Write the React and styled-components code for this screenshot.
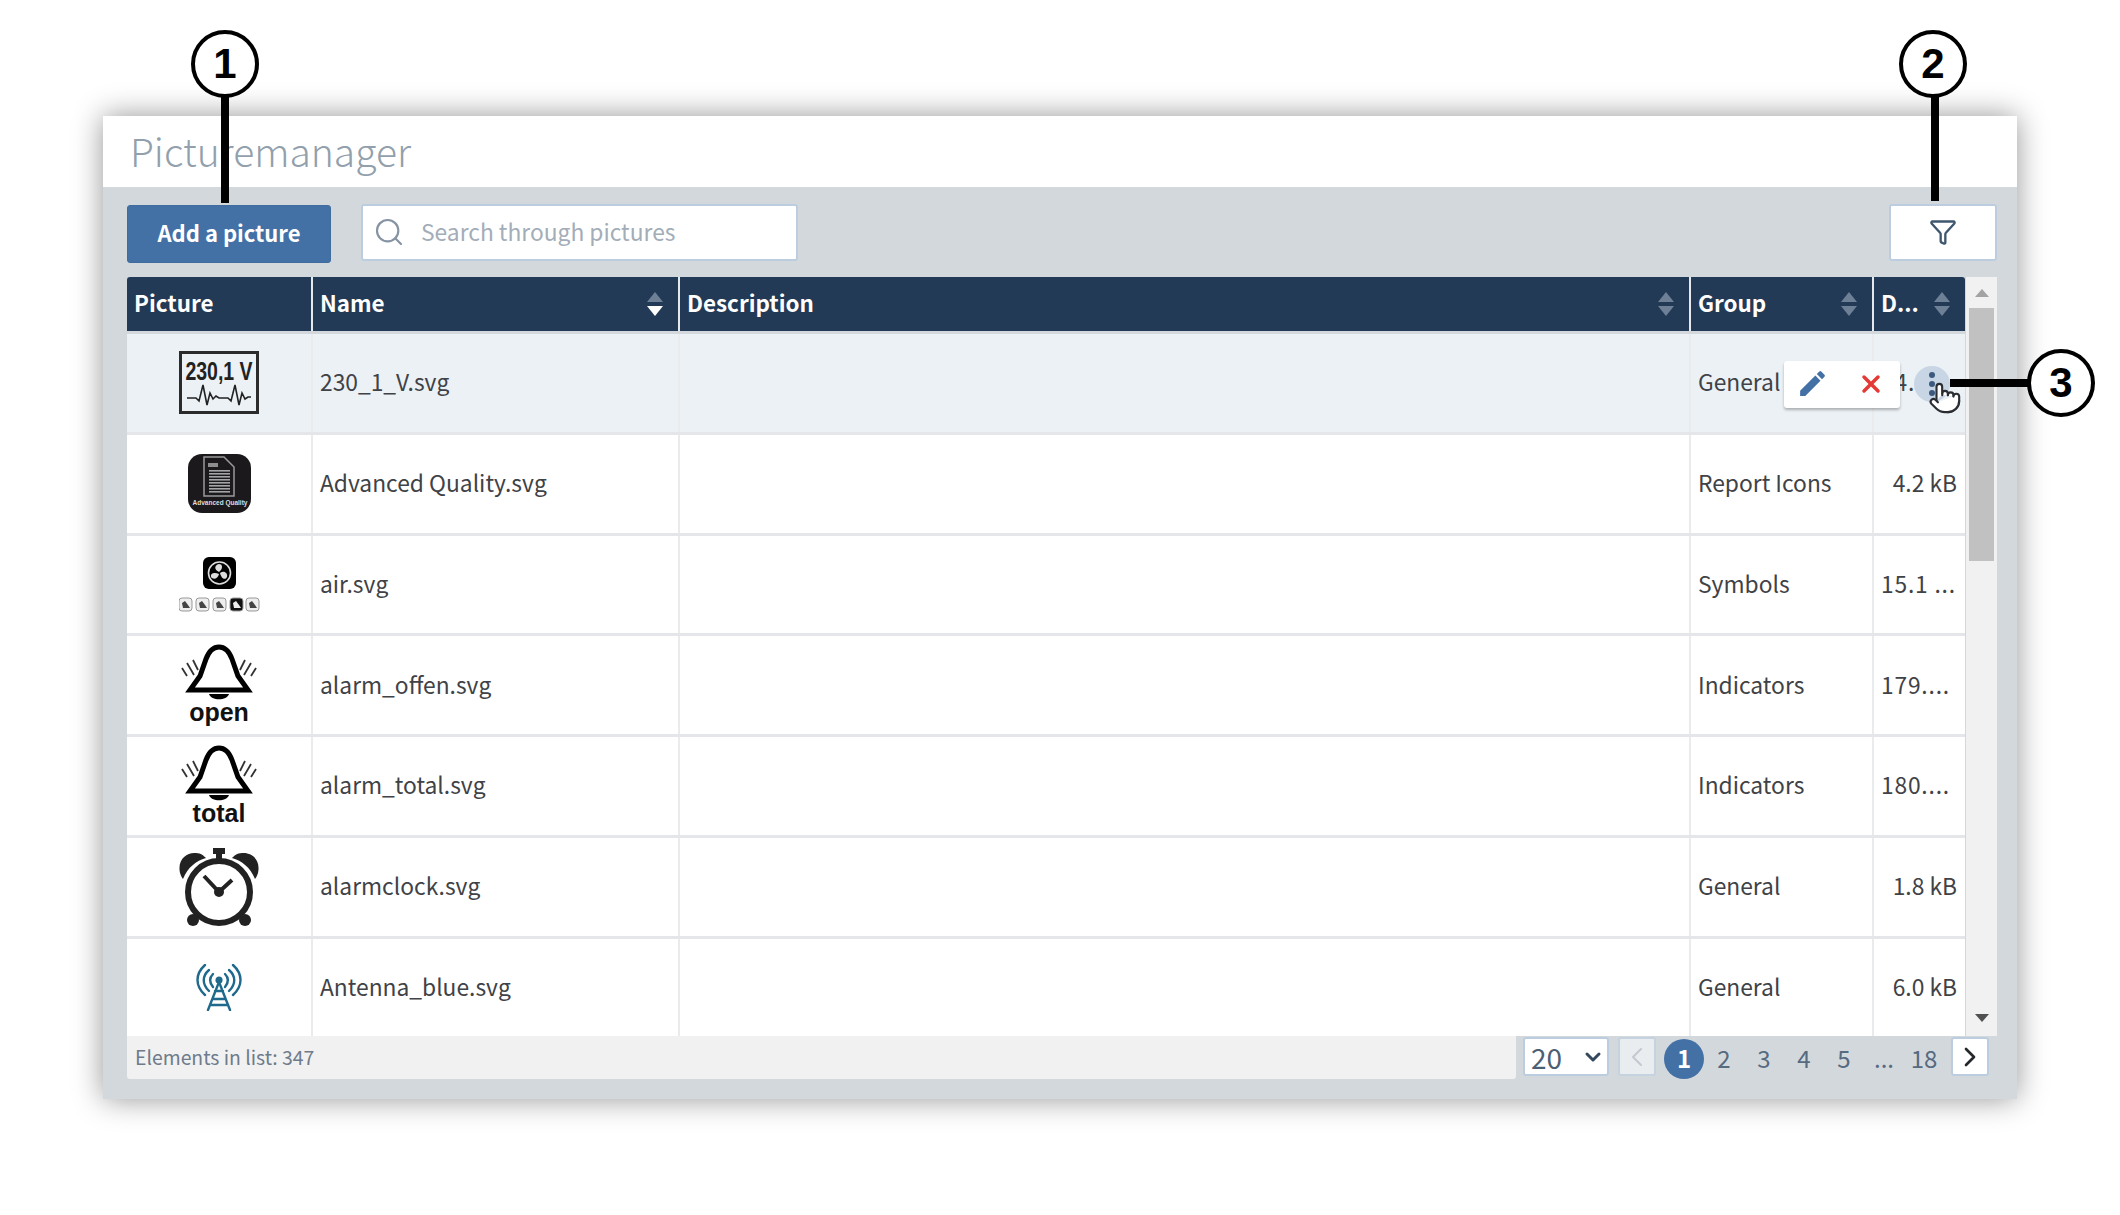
import React from "react";
import styled, { createGlobalStyle } from "styled-components";
import { Search, Funnel, ChevronDown, ChevronLeft, ChevronRight, X, Pointer } from "lucide-react";
import { MdEdit } from "react-icons/md";

const Global = createGlobalStyle`
  html, body {
    margin: 0;
    background: #fff;
  }
  body {
    font-family: "Noto Sans CJK SC", "Noto Sans", sans-serif;
  }
`;

const Page = styled.div`
  position: relative;
  width: 2120px;
  height: 1215px;
  overflow: hidden;
  padding: 116px 0 0 103px;
  box-sizing: border-box;
`;

const Card = styled.div`
  width: 1914px;
  height: 983px;
  background: #d3d8dd;
  box-shadow: 0 0 28px rgba(0, 0, 0, 0.42);
  display: flex;
  flex-direction: column;
`;

const TitleBar = styled.div`
  height: 71px;
  background: #fff;
  padding: 0 0 3px 27px;
  box-sizing: border-box;
  display: flex;
  align-items: center;
`;

const Title = styled.h1`
  margin: 0;
  font-size: 39px;
  line-height: 48px;
  font-weight: 300;
  color: #929fac;
`;

const Toolbar = styled.div`
  height: 90px;
  box-sizing: border-box;
  padding: 17px 20px 0 24px;
  display: flex;
  align-items: flex-start;
`;

const AddButton = styled.button`
  width: 204px;
  height: 58px;
  margin-top: 1px;
  border: 1px solid #3f6b9e;
  border-radius: 3px;
  background: #4471a5;
  color: #fff;
  font: 700 22px/28px "Noto Sans CJK SC", sans-serif;
  padding: 0 0 5px;
`;

const SearchBox = styled.div`
  width: 437px;
  height: 57px;
  margin-left: 30px;
  box-sizing: border-box;
  background: #fff;
  border: 2px solid #bccde0;
  border-radius: 3px;
  display: flex;
  align-items: center;
  padding: 0 0 2px 10px;
  gap: 16px;
  color: #8593a3;
  font-size: 22.8px;
  line-height: 30px;
  span {
    color: #a3adb8;
  }
`;

const FilterButton = styled.div`
  width: 108px;
  height: 57px;
  margin-left: auto;
  box-sizing: border-box;
  background: #fff;
  border: 2px solid #bccde0;
  border-radius: 3px;
  display: flex;
  align-items: center;
  justify-content: center;
  padding-bottom: 2px;
  color: #3f566f;
`;

const TableArea = styled.div`
  height: 759px;
  margin: 0 20px 0 24px;
  display: flex;
  overflow: hidden;
`;

const Table = styled.div`
  width: 1838px;
`;

const HeadRow = styled.div`
  display: grid;
  grid-template-columns: 184px 367px 1011px 183px 93px;
  height: 54px;
  background: #233a56;
  border-radius: 3px 3px 0 0;
  margin-bottom: 3px;
`;

const HeadCell = styled.div`
  display: flex;
  align-items: center;
  justify-content: space-between;
  box-sizing: border-box;
  padding: 0 14px 0 7px;
  color: #fff;
  font-size: 22.4px;
  line-height: 30px;
  font-weight: 700;
  border-left: ${(p) => (p.$first ? "0" : "2px solid #e6e9ec")};
  span {
    margin-bottom: 5px;
  }
`;

const Row = styled.div`
  position: relative;
  display: grid;
  grid-template-columns: 184px 367px 1011px 183px 93px;
  height: 100.75px;
  box-sizing: border-box;
  background: ${(p) => (p.$hover ? "#ecf1f5" : "#fff")};
  border-bottom: 3px solid #e4e6e9;
`;

const Cell = styled.div`
  display: flex;
  align-items: center;
  justify-content: ${(p) => (p.$right ? "flex-end" : "flex-start")};
  box-sizing: border-box;
  padding: 0 8px 1px 7px;
  border-left: ${(p) => (p.$first ? "0" : "2px solid #e9ebed")};
  color: #3f4246;
  font-size: 22.8px;
  line-height: 30px;
  white-space: nowrap;
  overflow: hidden;
  letter-spacing: ${(p) => (p.$clip ? "0.8px" : "0")};
`;

const PictureCell = styled(Cell)`
  justify-content: center;
  padding: 0;
`;

const Popover = styled.div`
  position: absolute;
  left: 1657px;
  top: 27px;
  width: 116px;
  height: 47px;
  background: #fff;
  border-radius: 3px;
  box-shadow: 0 2px 3px rgba(0, 0, 0, 0.28);
  display: flex;
  align-items: center;
  justify-content: space-between;
  padding: 0 15px 2px 12px;
  box-sizing: border-box;
`;

const Dots = styled.div`
  position: absolute;
  left: 1787px;
  top: 32px;
  width: 36px;
  height: 36px;
  border-radius: 50%;
  background: #c7d5e5;
  display: flex;
  flex-direction: column;
  align-items: center;
  justify-content: center;
  gap: 3px;
  i {
    width: 6px;
    height: 6px;
    border-radius: 50%;
    background: #3c5a7e;
  }
`;

const Hand = styled.div`
  position: absolute;
  left: 1801px;
  top: 47px;
  width: 30px;
  height: 36px;
  color: #2a2e33;
  svg {
    fill: #fff;
    display: block;
  }
`;

const Scrollbar = styled.div`
  width: 31px;
  margin-left: 1px;
  background: #f1f1f1;
  position: relative;
  display: flex;
  flex-direction: column;
  align-items: center;
  padding-top: 12px;
  box-sizing: border-box;
`;

const Arrow = styled.div`
  width: 0;
  height: 0;
  border-left: 7px solid transparent;
  border-right: 7px solid transparent;
  ${(p) => (p.$down ? "border-top: 8px solid #505050;" : "border-bottom: 8px solid #a3a3a3;")}
  ${(p) => (p.$down ? "margin-top: auto; margin-bottom: 14px;" : "")}
`;

const Thumb = styled.div`
  width: 25px;
  height: 253px;
  margin-top: 11px;
  background: #c1c1c1;
`;

const Footer = styled.div`
  height: 43px;
  margin: 0 28px 0 24px;
  display: flex;
  align-items: flex-start;
`;

const Count = styled.div`
  width: 1389px;
  height: 43px;
  background: #f1f1f1;
  border-radius: 0 0 3px 3px;
  padding-left: 8px;
  box-sizing: border-box;
  color: #6e7b8b;
  font-size: 19.4px;
  line-height: 42px;
`;

const PageSize = styled.div`
  width: 86px;
  height: 39px;
  margin: 1px 0 0 7px;
  box-sizing: border-box;
  background: #fff;
  border: 2px solid #bccde0;
  border-radius: 3px;
  color: #4d5f74;
  font-size: 28px;
  line-height: 36px;
  display: flex;
  align-items: center;
  justify-content: space-between;
  padding: 0 2px 0 6px;
`;

const PageNav = styled.div`
  width: 38px;
  height: 39px;
  margin: 1px ${(p) => (p.$prev ? "0 0 9px" : "0 0 7px")};
  box-sizing: border-box;
  background: ${(p) => (p.$prev ? "#e9edf0" : "#fff")};
  border: 2px solid ${(p) => (p.$prev ? "#c5d2e0" : "#bccde0")};
  border-radius: 3px;
  color: ${(p) => (p.$prev ? "#c3c9cf" : "#24282d")};
  display: flex;
  align-items: center;
  justify-content: center;
`;

const Pages = styled.div`
  display: flex;
  margin-left: 8px;
  margin-top: 3px;
`;

const PageItem = styled.div`
  width: 40px;
  height: 40px;
  border-radius: 50%;
  background: ${(p) => (p.$active ? "#4471a5" : "transparent")};
  color: ${(p) => (p.$active ? "#fff" : "#566a80")};
  font-size: 24px;
  font-weight: ${(p) => (p.$active ? 700 : 400)};
  line-height: 38px;
  text-align: center;
`;

const Callout = styled.div`
  position: absolute;
  left: ${(p) => p.$x - 34}px;
  top: ${(p) => p.$y - 34}px;
  width: 68px;
  height: 68px;
  box-sizing: border-box;
  border: 4px solid #000;
  border-radius: 50%;
  background: #fff;
  color: #000;
  font: 700 42px/60px "Liberation Sans", Arial, sans-serif;
  text-align: center;
  z-index: 3;
`;

const Leader = styled.div`
  position: absolute;
  background: #000;
  z-index: 2;
`;

const VLeader = styled(Leader)`
  left: ${(p) => p.$x}px;
  top: 96px;
  width: 8px;
  height: ${(p) => p.$h}px;
`;

const HLeader = styled(Leader)`
  left: 1950px;
  top: 379px;
  width: 80px;
  height: 8px;
`;

const IconText = styled.text`
  font-family: "Liberation Sans", Arial, sans-serif;
  font-weight: 700;
`;

const SortArrows = ({ active }) => (
  <svg width="18" height="24" viewBox="0 0 18 24">
    <path d="M9 0 L17 10 H1 Z" fill="#6d8096" />
    <path d="M1 14 H17 L9 24 Z" fill={active ? "#fff" : "#6d8096"} />
  </svg>
);

const VoltIcon = () => (
  <svg width="80" height="63" viewBox="0 0 80 63">
    <rect x="1.5" y="1.5" width="77" height="60" fill="none" stroke="#2b2b2b" strokeWidth="3" />
    <IconText transform="translate(40 29) scale(0.78 1)" fontSize="25" textAnchor="middle" fill="#222">
      230,1 V
    </IconText>
    <path
      d="M8 47 H17 L20 50 L24 34 L28 54 L31 42 L34 48 L37 45 L40 47 H49 L52 50 L56 34 L60 54 L63 42 L66 48 L69 46 H72"
      fill="none"
      stroke="#222"
      strokeWidth="1.6"
    />
  </svg>
);

const ReportIcon = () => (
  <svg width="63" height="59" viewBox="0 0 63 59">
    <rect width="63" height="59" rx="14" fill="#1b191c" />
    <path d="M16 3 H36 L46 13 V42 H16 Z" fill="none" stroke="#9a9a9a" strokeWidth="1.5" />
    <rect x="20" y="9" width="10" height="4" fill="#8d8d8d" />
    {[16, 19, 22, 25, 28, 31, 34, 37].map((y) => (
      <rect key={y} x="21" y={y} width="21" height="1.6" fill="#a5a5a5" />
    ))}
    <IconText x="32" y="51" fontSize="6.5" textAnchor="middle" fill="#ddd">
      Advanced Quality
    </IconText>
  </svg>
);

const MiniFan = ({ x, dark }) => (
  <g>
    <rect x={x} y="41" width="13" height="13" rx="3" fill={dark ? "#111" : "#eee"} stroke="#999" strokeWidth="1" />
    <path d={`M${x + 3} ${46} l3 -2 l3 4 l2 3 h-7 z`} fill={dark ? "#eee" : "#444"} />
  </g>
);

const AirIcon = () => (
  <svg width="81" height="55" viewBox="0 0 81 55">
    <rect x="24" y="0" width="33" height="32" rx="6" fill="#000" />
    <circle cx="40.5" cy="16" r="11" fill="none" stroke="#ddd" strokeWidth="1.6" />
    <path d="M40 15 C35 13 35 8 40 7 C44 7 44 12 40 15 Z" fill="#ddd" />
    <path d="M41 16 C45 13 49 16 48 20 C46 24 42 21 41 16 Z" fill="#ddd" />
    <path d="M40 17 C39 22 34 23 32 20 C31 16 36 15 40 17 Z" fill="#ddd" />
    {[0, 17, 34, 51, 67].map((x, i) => (
      <MiniFan key={x} x={x} dark={i === 3} />
    ))}
  </svg>
);

const BellIcon = ({ label }) => (
  <svg width="76" height="86" viewBox="0 -3 76 86">
    <path
      d="M9 45 H67 L57 31 L51 14 C48 6 44 2 38 2 C32 2 28 6 25 14 L19 31 Z"
      fill="none"
      stroke="#000"
      strokeWidth="5"
      strokeLinejoin="miter"
    />
    <path d="M28 49 H48 C46 56 30 56 28 49 Z" fill="#000" />
    <path
      d="M1 23 L6 31 M6 18 L13 30 M12 15 L17 25 M75 23 L70 31 M70 18 L63 30 M64 15 L59 25"
      stroke="#333"
      strokeWidth="1.8"
    />
    <IconText x="38" y="76" fontSize="25" textAnchor="middle" fill="#111">
      {label}
    </IconText>
  </svg>
);

const ClockIcon = () => (
  <svg width="80" height="80" viewBox="0 0 80 80">
    <circle cx="40" cy="45" r="31" fill="#fff" stroke="#222" strokeWidth="6" />
    <path d="M1 26 C-2 12 8 5 17 6 C22 6 25 9 27 11 C17 14 9 20 4 32 C3 31 2 29 1 26 Z" fill="#222" />
    <path d="M79 26 C82 12 72 5 63 6 C58 6 55 9 53 11 C63 14 71 20 76 32 C77 31 78 29 79 26 Z" fill="#222" />
    <rect x="34" y="1" width="12" height="6" fill="#222" />
    <rect x="37" y="6" width="6" height="6" fill="#222" />
    <circle cx="14" cy="73" r="6" fill="#222" />
    <circle cx="66" cy="73" r="6" fill="#222" />
    <path d="M25 29 L40 45 L53 33" fill="none" stroke="#222" strokeWidth="4" />
    <circle cx="40" cy="45" r="5" fill="#222" />
  </svg>
);

const AntennaIcon = () => (
  <svg width="46" height="47" viewBox="0 0 46 47" fill="none" stroke="#1f6a8c" strokeWidth="2.4" strokeLinecap="round">
    <path d="M9 1 C-1 10 -1 22 9 31 M37 1 C47 10 47 22 37 31" />
    <path d="M13 6 C6 12 6 20 13 27 M33 6 C40 12 40 20 33 27" />
    <path d="M17 10 C13 14 13 18 17 23 M29 10 C33 14 33 18 29 23" />
    <circle cx="23" cy="16" r="2.4" fill="#1f6a8c" />
    <path d="M23 18 L12 46 M23 18 L34 46 M17 35 H29 M19 27 H27 M14 41 H32" />
  </svg>
);

const rows = [
  { icon: <VoltIcon />, name: "230_1_V.svg", group: "General", size: "14....", clip: true, hover: true },
  { icon: <ReportIcon />, name: "Advanced Quality.svg", group: "Report Icons", size: "4.2 kB" },
  { icon: <AirIcon />, name: "air.svg", group: "Symbols", size: "15.1 ...", clip: true },
  { icon: <BellIcon label="open" />, name: "alarm_offen.svg", group: "Indicators", size: "179....", clip: true },
  { icon: <BellIcon label="total" />, name: "alarm_total.svg", group: "Indicators", size: "180....", clip: true },
  { icon: <ClockIcon />, name: "alarmclock.svg", group: "General", size: "1.8 kB" },
  { icon: <AntennaIcon />, name: "Antenna_blue.svg", group: "General", size: "6.0 kB" },
];

const pages = ["1", "2", "3", "4", "5", "...", "18"];

export default function App() {
  return (
    <Page>
      <Global />
      <Card>
        <TitleBar>
          <Title>Picturemanager</Title>
        </TitleBar>
        <Toolbar>
          <AddButton>Add a picture</AddButton>
          <SearchBox>
            <Search size={32} strokeWidth={1.6} />
            <span>Search through pictures</span>
          </SearchBox>
          <FilterButton>
            <Funnel size={28} strokeWidth={2} />
          </FilterButton>
        </Toolbar>
        <TableArea>
          <Table>
            <HeadRow>
              <HeadCell $first>
                <span>Picture</span>
              </HeadCell>
              <HeadCell>
                <span>Name</span>
                <SortArrows active />
              </HeadCell>
              <HeadCell>
                <span>Description</span>
                <SortArrows />
              </HeadCell>
              <HeadCell>
                <span>Group</span>
                <SortArrows />
              </HeadCell>
              <HeadCell>
                <span>D...</span>
                <SortArrows />
              </HeadCell>
            </HeadRow>
            {rows.map((row) => (
              <Row key={row.name} $hover={row.hover}>
                <PictureCell $first>{row.icon}</PictureCell>
                <Cell>{row.name}</Cell>
                <Cell />
                <Cell>{row.group}</Cell>
                <Cell $right={!row.clip} $clip={row.clip}>
                  {row.size}
                </Cell>
                {row.hover && (
                  <>
                    <Popover>
                      <MdEdit size={33} color="#4471a5" />
                      <X size={28} strokeWidth={3} color="#e53935" />
                    </Popover>
                    <Dots>
                      <i />
                      <i />
                      <i />
                    </Dots>
                    <Hand>
                      <Pointer size={34} strokeWidth={1.5} />
                    </Hand>
                  </>
                )}
              </Row>
            ))}
          </Table>
          <Scrollbar>
            <Arrow />
            <Thumb />
            <Arrow $down />
          </Scrollbar>
        </TableArea>
        <Footer>
          <Count>Elements in list: 347</Count>
          <PageSize>
            20
            <ChevronDown size={24} strokeWidth={3} color="#34475d" />
          </PageSize>
          <PageNav $prev>
            <ChevronLeft size={32} strokeWidth={1.5} />
          </PageNav>
          <Pages>
            {pages.map((p) => (
              <PageItem key={p} $active={p === "1"}>
                {p}
              </PageItem>
            ))}
          </Pages>
          <PageNav>
            <ChevronRight size={32} strokeWidth={2} />
          </PageNav>
        </Footer>
      </Card>
      <VLeader $x={221} $h={107} />
      <Callout $x={225} $y={64}>1</Callout>
      <VLeader $x={1931} $h={105} />
      <Callout $x={1933} $y={64}>2</Callout>
      <HLeader />
      <Callout $x={2061} $y={383}>3</Callout>
    </Page>
  );
}
